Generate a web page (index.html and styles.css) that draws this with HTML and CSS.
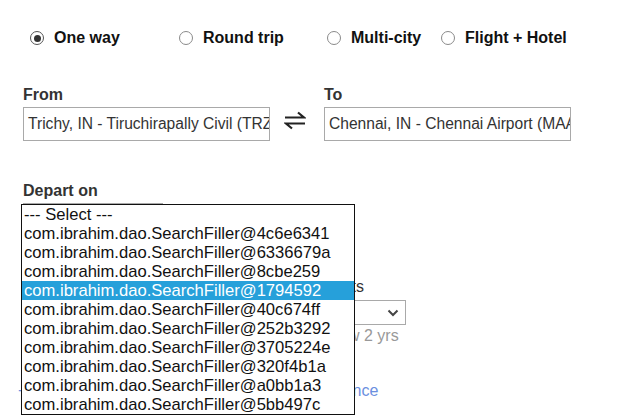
FILE: index.html
```html
<!DOCTYPE html>
<html>
<head>
<meta charset="utf-8">
<link rel="stylesheet" href="styles.css">
</head>
<body>
<div class="page">
  <div class="trip-types">
    <label class="trip"><span class="radio checked"></span><span>One way</span></label>
    <label class="trip"><span class="radio"></span><span>Round trip</span></label>
    <label class="trip"><span class="radio"></span><span>Multi-city</span></label>
    <label class="trip"><span class="radio"></span><span>Flight + Hotel</span></label>
  </div>

  <div class="route">
    <div class="field">
      <div class="label">From</div>
      <div class="input">Trichy, IN - Tiruchirapally Civil (TRZ)</div>
    </div>
    <div class="swap">
      <svg width="22" height="20" viewBox="0 0 22 20"><path d="M1 7.5 H20 L14 2.5" fill="none" stroke="#222" stroke-width="2.2"/><path d="M21 13.5 H2 L8 18.5" fill="none" stroke="#222" stroke-width="2.2"/></svg>
    </div>
    <div class="field">
      <div class="label">To</div>
      <div class="input">Chennai, IN - Chennai Airport (MAA)</div>
    </div>
  </div>

  <div class="depart">
    <div class="label">Depart on</div>
    <div class="date-select"></div>
    <div class="options">
      <div class="opt">--- Select ---</div>
      <div class="opt">com.ibrahim.dao.SearchFiller@4c6e6341</div>
      <div class="opt">com.ibrahim.dao.SearchFiller@6336679a</div>
      <div class="opt">com.ibrahim.dao.SearchFiller@8cbe259</div>
      <div class="opt selected">com.ibrahim.dao.SearchFiller@1794592</div>
      <div class="opt">com.ibrahim.dao.SearchFiller@40c674ff</div>
      <div class="opt">com.ibrahim.dao.SearchFiller@252b3292</div>
      <div class="opt">com.ibrahim.dao.SearchFiller@3705224e</div>
      <div class="opt">com.ibrahim.dao.SearchFiller@320f4b1a</div>
      <div class="opt">com.ibrahim.dao.SearchFiller@a0bb1a3</div>
      <div class="opt">com.ibrahim.dao.SearchFiller@5bb497c</div>
    </div>
  </div>

  <div class="pax">
    <div class="pax-col">
      <div class="pax-label">Infants</div>
      <div class="pax-select"><span>0</span><svg width="12" height="8" viewBox="0 0 12 8"><path d="M1.5 1.5 L6 6 L10.5 1.5" fill="none" stroke="#444" stroke-width="2"/></svg></div>
      <div class="pax-hint">Below 2 yrs</div>
    </div>
  </div>

  <div class="more"><span class="plus">+</span><span class="more-text">Class of travel, Airline preference</span></div>
</div>
</body>
</html>
```

FILE: styles.css
```css
* { box-sizing: border-box; }
html, body { margin: 0; padding: 0; background: #fff; }
body {
  font-family: "Liberation Sans", Arial, sans-serif;
  color: #222;
  width: 618px;
  height: 418px;
  overflow: hidden;
}
.page { padding-top: 28px; }

.trip-types {
  display: grid;
  grid-template-columns: 149px 148px 114px auto;
  padding-left: 30px;
  height: 20px;
}
.trip {
  display: flex;
  align-items: center;
  gap: 10px;
  font-size: 16px;
  font-weight: bold;
  color: #111;
}
.radio {
  width: 14px;
  height: 14px;
  border-radius: 50%;
  border: 1px solid #8a8a8a;
  background: #fff;
  display: flex;
  align-items: center;
  justify-content: center;
}
.radio.checked { border-color: #555; }
.radio.checked::after {
  content: "";
  width: 7px;
  height: 7px;
  border-radius: 50%;
  background: #333;
}

.route {
  display: grid;
  grid-template-columns: 247px 54px 247px;
  padding-left: 23px;
  margin-top: 37px;
}
.label {
  font-size: 16px;
  font-weight: bold;
  color: #333;
  height: 19px;
  line-height: 19px;
  margin-bottom: 3px;
}
.input {
  height: 34px;
  border: 1px solid #a9a9a9;
  padding: 0 4px;
  font-size: 15.6px;
  line-height: 32px;
  color: #333;
  white-space: nowrap;
  overflow: hidden;
}
.swap {
  display: flex;
  align-items: flex-end;
  justify-content: center;
  padding-bottom: 11px;
  padding-right: 4px;
}

.depart {
  position: relative;
  padding-left: 23px;
  margin-top: 40px;
}
.depart .label { margin-bottom: 3px; }
.date-select {
  width: 140px;
  height: 28px;
  border: 1px solid #a9a9a9;
}
.options {
  position: absolute;
  left: 21px;
  top: 23px;
  width: 334px;
  background: #fff;
  border: 1px solid #111;
  font-size: 16.6px;
  color: #111;
  z-index: 5;
}
.opt {
  height: 19px;
  line-height: 19px;
  padding-left: 2px;
  white-space: nowrap;
}
.opt.selected {
  background: #26a0da;
  color: #fff;
}

.pax {
  display: flex;
  padding-left: 316px;
  margin-top: 46px;
}
.pax-col { width: 90px; }
.pax-label {
  font-size: 16px;
  color: #333;
  height: 19px;
  line-height: 19px;
  margin-bottom: 4px;
}
.pax-select {
  height: 25px;
  border: 1px solid #a9a9a9;
  display: flex;
  align-items: center;
  justify-content: space-between;
  padding: 0 6px;
  font-size: 14px;
  color: #333;
}
.pax-hint {
  margin-top: 2px;
  font-size: 16px;
  color: #999;
  white-space: nowrap;
}

.more {
  margin-top: 37px;
  padding-left: 18px;
  display: flex;
  gap: 6px;
  font-size: 16px;
  color: #6b8fe0;
  white-space: nowrap;
}
.more-text { width: 345px; text-align: right; }
```
